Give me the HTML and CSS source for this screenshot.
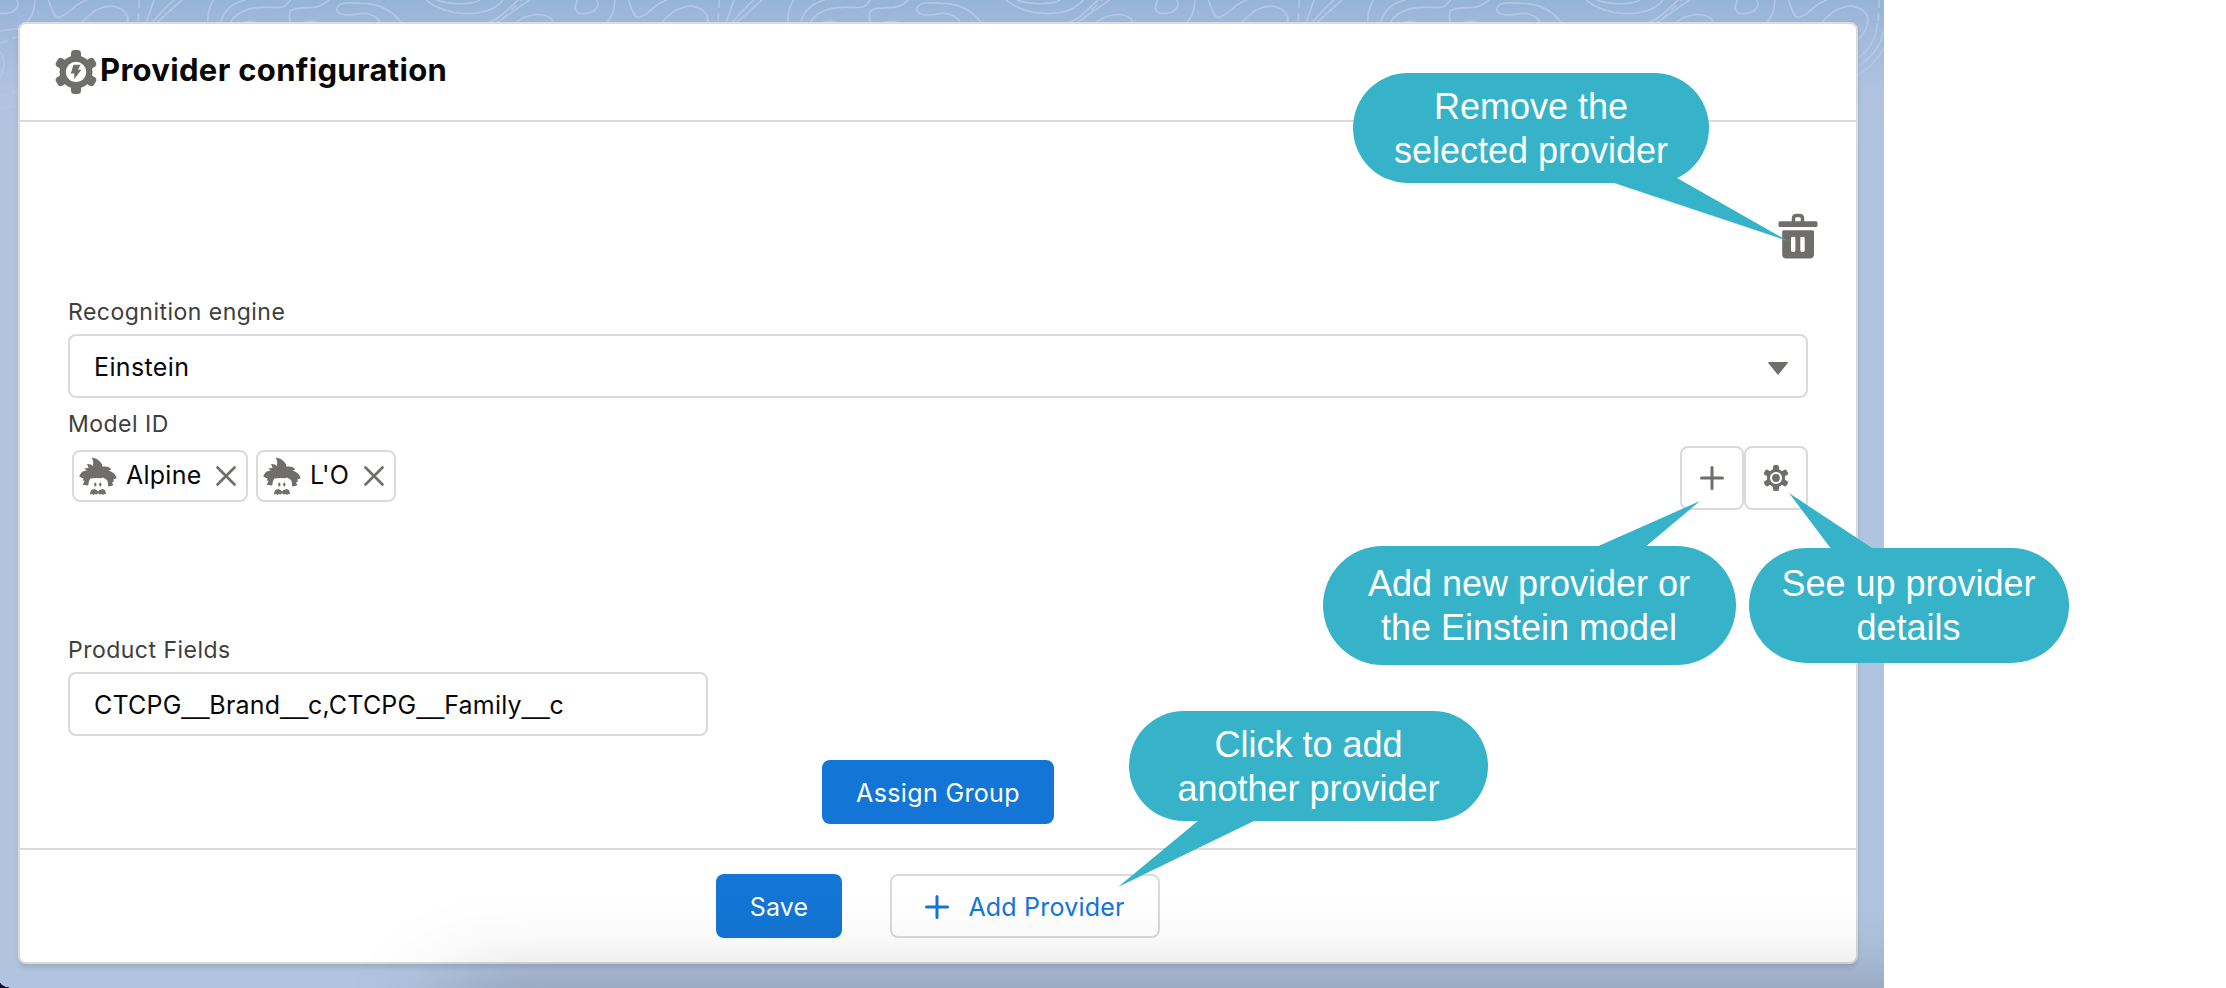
FILE: index.html
```html
<!DOCTYPE html>
<html lang="en">
<head>
<meta charset="utf-8">
<title>Provider configuration</title>
<link rel="stylesheet" href="styles.css">
</head>
<body>
<svg class="defs" width="0" height="0" aria-hidden="true">
  <defs>
    <symbol id="einstein" viewBox="237 530 114 116">
      <path d="M275 531C293 533 306 545 308 559C318 556 328 559 334 566L325 571C338 573 347 582 350 593L340 597L342 603L336 605L340 614L325 619L323 603C321 596 313 595 308 591C302 596 296 592 291 593C284 591 277 595 271 594C267 600 266 608 264 615L248 613L254 601L248 600L251 595L238 588C240 578 248 570 262 570L252 565L266 562L261 551C268 550 275 553 279 557C281 547 279 539 275 531Z"/>
      <ellipse cx="286" cy="612" rx="3.5" ry="6"/><ellipse cx="301" cy="612" rx="3.5" ry="6"/>
      <path d="M271 643C269 631 275 625 284 626C289 627 293 630 294 634C296 629 301 626 306 626C315 626 319 632 317 643L312 640L309 644L305 640L300 643L294 638L288 643L284 640L280 644L276 640Z"/>
    </symbol>
    <symbol id="close" viewBox="0 0 20 20"><path d="M1.5 1.5L18.500 18.500M18.500 1.500L1.500 18.500" fill="none" stroke="currentColor" stroke-width="2.600" stroke-linecap="round"/></symbol>
    <symbol id="plus" viewBox="0 0 24 24"><path d="M12 1.500V22.500M1.500 12H22.500" fill="none" stroke="currentColor" stroke-width="3" stroke-linecap="round"/></symbol>
    <pattern id="topo" width="580" height="140" patternUnits="userSpaceOnUse">
      <g transform="scale(.33333)" fill="none" stroke="#b2c6e5" stroke-width="5">
        <path d="M0 40C30 45 55 30 54 10L50 0M1732 0C1722 25 1725 35 1740 40M104 0C104 35 95 60 60 85L0 93M145 0C155 25 160 50 175 52C205 50 220 10 262 0M244 70C280 25 330 5 365 28C380 40 385 50 385 70M438 70L462 0M455 70C480 40 505 15 522 0M468 70L546 0M641 0C625 25 622 45 624 70M662 70C670 30 695 10 735 0M690 70C715 20 780 20 820 22C865 25 855 15 872 0M870 70L868 42C868 25 890 24 940 22C970 20 975 5 987 0M722 70Q750 58 775 70M900 70Q935 58 960 70M1205 70C1180 35 1145 10 1085 10C1040 8 1020 5 1010 25C1010 45 1040 48 1065 43C1100 35 1130 45 1142 70M1278 0C1340 50 1450 55 1500 10L1510 0M1310 0C1360 18 1420 12 1440 0M1458 70C1500 60 1530 20 1555 0M1488 70L1588 0M1545 70C1580 40 1630 35 1655 58L1658 70"/>
        <path stroke-dasharray="24 16" d="M418 0L414 70M1506 60L1565 0M0 130L56 108M0 290L56 270"/>
        <path d="M0 155C15 175 18 205 0 230M0 325L56 314M346 125C375 105 388 70 382 45M346 182C390 150 410 110 412 70M346 205C400 170 425 130 430 95M346 230C390 205 415 175 432 145"/>
      </g>
    </pattern>
  </defs>
</svg>
<div class="page">
  <svg class="topography" width="1884" height="120"><rect width="1884" height="120" fill="url(#topo)"/></svg>
  <section class="card">
    <header class="card-header">
      <svg class="header-icon" viewBox="0 0 42 46">
        <g fill="currentColor"><circle cx="21" cy="23" r="16.500"/>
          <rect x="16" y="1" width="10" height="44" rx="3.500"/>
          <rect x="16" y="1" width="10" height="44" rx="3.500" transform="rotate(60 21 23)"/>
          <rect x="16" y="1" width="10" height="44" rx="3.500" transform="rotate(120 21 23)"/></g>
        <circle cx="21" cy="23" r="10.200" fill="#fff"/>
        <path d="M18.500 15.800H25.500L23 20.800H26.500L19.300 30V24.500H15.800Z" fill="currentColor"/>
      </svg>
      <h1 class="title">Provider configuration</h1>
    </header>
    <div class="card-body">
      <div class="delete-row">
        <svg class="trash" viewBox="0 0 40 46" fill="currentColor">
          <path d="M15.500 9V5.500Q15.500 2.500 18.500 2.500H21.500Q24.500 2.500 24.500 5.500V9" fill="none" stroke="currentColor" stroke-width="3.500"/>
          <rect x=".5" y="8.200" width="39" height="5.800" rx="1.500"/>
          <path fill-rule="evenodd" d="M5.500 17.300H34.500Q36 17.300 36 18.800V41Q36 45.500 31.500 45.500H8.500Q4.200 45.500 4.200 41V18.800Q4.200 17.300 5.500 17.300ZM13 25V37.500Q13 39 15.200 39Q17.400 39 17.400 37.500V25Q17.400 23.700 15.200 23.700Q13 23.700 13 25ZM22.300 25V37.500Q22.300 39 24.500 39Q26.700 39 26.700 37.500V25Q26.700 23.700 24.500 23.700Q22.300 23.700 22.300 25Z"/>
        </svg>
      </div>
      <div class="label label-engine">Recognition engine</div>
      <div class="field select"><span>Einstein</span><svg class="caret" viewBox="0 0 20 13"><path d="M.5 0H19.500L20 .8L10 13L0 .8Z" fill="currentColor"/></svg></div>
      <div class="label label-model">Model ID</div>
      <div class="model-row">
        <div class="pills">
          <span class="pill"><svg class="avatar"><use href="#einstein"/></svg><span class="pill-text">Alpine</span><svg class="close"><use href="#close"/></svg></span>
          <span class="pill second"><svg class="avatar"><use href="#einstein"/></svg><span class="pill-text">L'O</span><svg class="close"><use href="#close"/></svg></span>
        </div>
        <div class="icon-buttons">
          <span class="icon-button"><svg class="plus"><use href="#plus"/></svg></span>
          <span class="icon-button"><svg class="gear" viewBox="0 0 24 26">
            <g fill="currentColor"><circle cx="12" cy="13" r="9.200"/>
            <rect x="9" y="0" width="6" height="26" rx="2"/><rect x="9" y="0" width="6" height="26" rx="2" transform="rotate(60 12 13)"/><rect x="9" y="0" width="6" height="26" rx="2" transform="rotate(120 12 13)"/></g>
            <circle cx="12" cy="13" r="5" fill="currentColor" stroke="#fff" stroke-width="2.200"/></svg></span>
        </div>
      </div>
      <div class="label label-fields">Product Fields</div>
      <div class="field fields-input"><span class="fields-value">CTCPG<span class="underscore">__</span>Brand<span class="underscore">__</span>c,CTCPG<span class="underscore">__</span>Family<span class="underscore">__</span>c</span></div>
      <div class="assign-row"><span class="button primary assign">Assign Group</span></div>
    </div>
    <footer class="card-footer">
      <span class="button primary save">Save</span>
      <span class="button add"><svg class="plus"><use href="#plus"/></svg><span>Add Provider</span></span>
    </footer>
  </section>
  <div class="dock-shadow"></div>
</div>
<svg class="tails" width="2226" height="988" fill="#36b3c9">
  <path d="M1614 183L1600 165H1665L1677 178L1788 241ZM1594 548L1700 501L1644 548ZM1832 550L1789 493L1875 550ZM1199 820L1118 887L1256 820Z"/>
</svg>
<div class="callout remove">Remove the<br>selected provider</div>
<div class="callout add-new">Add new provider or<br>the Einstein model</div>
<div class="callout details">See up provider<br>details</div>
<div class="callout another">Click to add<br>another provider</div>
</body>
</html>
```

FILE: styles.css
```css
* { box-sizing: border-box; }
body {
  margin: 0;
  width: 2226px;
  height: 988px;
  position: relative;
  overflow: hidden;
  background: #fff;
  font-family: Inter, "Liberation Sans", sans-serif;
  color: #080707;
}
svg { display: block; flex: none; }
.defs { position: absolute; }
.page {
  position: relative;
  width: 1884px;
  height: 988px;
  padding: 22px 26px 24px 18px;
  overflow: hidden;
  background: linear-gradient(#95b4d6 0, #9fb8da 22px, #b0c2e0 90px, #b0c4df 160px);
}
.page::after {
  content: "";
  position: absolute;
  left: 0;
  bottom: 0;
  width: 14px;
  height: 6px;
  background: radial-gradient(ellipse 14px 6px at 100% 0, transparent 97%, #130b3b 100%);
}
.topography { position: absolute; top: 0; left: 0; }
.card {
  position: relative;
  display: flex;
  flex-direction: column;
  width: 1840px;
  height: 942px;
  border: 2px solid #dadada;
  border-radius: 8px;
  background: #fff;
  box-shadow: 0 4px 4px rgba(0, 0, 0, .1);
}
.card-header {
  display: flex;
  align-items: center;
  height: 98px;
  padding: 0 35px;
  border-bottom: 2px solid #dadada;
}
.header-icon { width: 42px; height: 46px; color: #706e6b; }
.title { margin: -5px 0 0 3px; font-size: 31px; font-weight: 700; line-height: 40px; letter-spacing: .32px; white-space: nowrap; }
.card-body { height: 726px; padding: 91px 48px 0; }
.delete-row { display: flex; justify-content: flex-end; margin: 0 -10px 35px 0; }
.trash { width: 40px; height: 46px; color: #706e6b; }
.label { height: 36px; margin-bottom: 4px; line-height: 36px; font-size: 23px; letter-spacing: .48px; color: #3e3e3c; white-space: nowrap; }
.label-model { margin-top: 8px; }
.label-fields { margin-top: 122px; }
.field {
  display: flex;
  align-items: center;
  height: 64px;
  padding: 2px 18px 0 24px;
  border: 2px solid #dadada;
  border-radius: 8px;
  font-size: 25px;
  letter-spacing: .36px;
  white-space: nowrap;
}
.select { justify-content: space-between; }
.caret { width: 20px; height: 13px; margin-top: 2px; color: #706e6b; }
.fields-input { width: 640px; letter-spacing: .2px; }
.underscore { font-family: "Liberation Sans", Arial, sans-serif; letter-spacing: 0; }
.model-row { display: flex; justify-content: space-between; height: 64px; }
.pills { display: flex; gap: 8px; padding: 4px 0 0 4px; }
.pill {
  display: flex;
  align-items: center;
  width: 176px;
  height: 52px;
  padding: 0 10px 0 5px;
  border: 2px solid #dadada;
  border-radius: 8px;
  font-size: 25px;
  letter-spacing: .25px;
}
.pill.second { width: 140px; }
.avatar { width: 38px; height: 39px; fill: #706e6b; }
.pill-text { margin: -3px 0 0 9px; white-space: nowrap; }
.close { width: 20px; height: 20px; margin-left: auto; color: #706e6b; }
.icon-buttons { display: flex; }
.icon-button {
  display: flex;
  align-items: center;
  justify-content: center;
  width: 64px;
  height: 64px;
  border: 2px solid #dadada;
  border-radius: 8px;
  color: #706e6b;
}
.plus { width: 24px; height: 24px; }
.gear { width: 24px; height: 26px; }
.assign-row { display: flex; justify-content: center; margin-top: 24px; }
.button {
  display: flex;
  align-items: center;
  justify-content: center;
  height: 64px;
  padding-top: 2px;
  border-radius: 8px;
  font-size: 25px;
  letter-spacing: .2px;
  white-space: nowrap;
}
.primary { background: #1375d5; color: #fff; }
.assign { width: 232px; letter-spacing: .35px; }
.card-footer {
  display: flex;
  justify-content: center;
  gap: 48px;
  height: 114px;
  padding-top: 24px;
  border-top: 2px solid #dadada;
}
.save { width: 126px; }
.add { width: 270px; gap: 19px; border: 2px solid #dadada; background: #fff; color: #1375d5; }
.add .plus { margin-top: -1px; }
.dock-shadow {
  position: absolute;
  left: 450px;
  top: 1005px;
  width: 1800px;
  height: 300px;
  box-shadow: 0 0 90px rgba(0, 0, 0, .35);
}
.tails { position: absolute; top: 0; left: 0; }
.callout {
  position: absolute;
  display: flex;
  align-items: center;
  justify-content: center;
  padding-top: 2px;
  background: #36b3c9;
  color: #fff;
  font: 36px/44px "Liberation Sans", Arial, sans-serif;
  text-align: center;
  white-space: nowrap;
}
.remove { left: 1353px; top: 73px; width: 356px; height: 110px; border-radius: 55px; }
.add-new { left: 1323px; top: 546px; width: 413px; height: 119px; padding: 0 1px 0 0; border-radius: 60px; }
.details { left: 1749px; top: 548px; width: 320px; height: 115px; padding: 0 1px 0 0; border-radius: 58px; }
.another { left: 1129px; top: 711px; width: 359px; height: 110px; border-radius: 55px; }
```
